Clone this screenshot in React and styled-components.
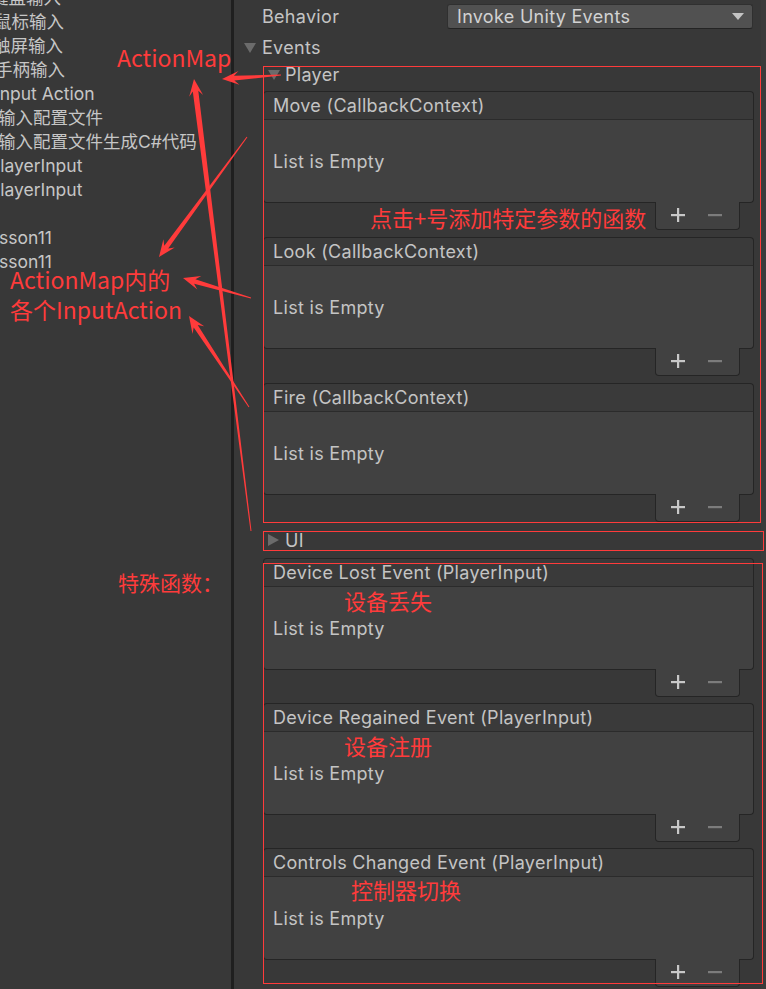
import React from 'react';
import styled, { createGlobalStyle } from 'styled-components';

const Global = createGlobalStyle`
  html, body { margin: 0; padding: 0; background: #383838; }
  body { width: 766px; height: 989px; overflow: hidden; }
`;

const UI_FONT = `Inter, "Noto Sans CJK SC", sans-serif`;
const NOTE_FONT = `"Noto Sans CJK SC", "Noto Sans", sans-serif`;
const RED = '#ff3b3b';

const Page = styled.div`
  position: relative;
  display: flex;
  width: 766px;
  height: 989px;
  overflow: hidden;
  background: #383838;
  font-family: ${UI_FONT};
  font-size: 18px;
  color: #c4c4c4;
`;

/* ---------- hierarchy (left) ---------- */
const Hierarchy = styled.div`
  flex: none;
  width: 231px;
  overflow: hidden;
  display: flex;
  flex-direction: column;
  margin-top: -14px;
  font-size: 17.5px;
`;

const TreeItem = styled.div`
  height: 24px;
  line-height: 24px;
  white-space: nowrap;
  margin-left: ${p => p.$shift}px;
  color: #c6c6c6;
`;

const Divider = styled.div`
  flex: none;
  width: 3px;
  background: #1f1f1f;
`;

/* ---------- inspector (right) ---------- */
const Inspector = styled.div`
  flex: 1;
  display: flex;
  flex-direction: column;
  min-width: 0;
  letter-spacing: 0.3px;
`;

const ScrollStrip = styled.div`
  flex: none;
  width: 5px;
  background: #3b3b3b;
`;

const PropertyRow = styled.div`
  display: flex;
  align-items: center;
  height: 33px;
  padding-left: 28px;
  padding-right: 8px;
`;

const Label = styled.div`
  width: 185px;
  flex: none;
`;

const Dropdown = styled.div`
  flex: 1;
  height: 25px;
  box-sizing: border-box;
  display: flex;
  align-items: center;
  justify-content: space-between;
  padding: 0 8px 0 9px;
  background: #515151;
  border: 1px solid #303030;
  border-bottom-color: #242424;
  border-radius: 3px;
  color: #d2d2d2;
`;

const Caret = styled.span`
  width: 0;
  height: 0;
  border-left: 6px solid transparent;
  border-right: 6px solid transparent;
  border-top: 7px solid #c4c4c4;
`;

const Foldout = styled.div`
  display: flex;
  align-items: center;
  height: ${p => p.$h}px;
  padding-left: ${p => p.$indent}px;
  gap: ${p => p.$gap}px;
  margin-top: ${p => p.$top || 0}px;
`;

const Arrow = styled.span`
  flex: none;
  width: 0;
  height: 0;
  ${p => p.$open
    ? `border-left: 6px solid transparent; border-right: 6px solid transparent; border-top: 10px solid #6b6b6b; margin-top: 1px;`
    : `border-top: 6px solid transparent; border-bottom: 6px solid transparent; border-left: 11px solid #6b6b6b;`}
`;

const Group = styled.div`
  display: flex;
  flex-direction: column;
  padding-left: 29px;
  padding-right: 7px;
`;

const CardList = styled.div`
  display: flex;
  flex-direction: column;
  gap: ${p => p.$gap}px;
  margin-top: ${p => p.$top || 0}px;
`;

const Card = styled.div`
  display: flex;
  flex-direction: column;
`;

const CardHeader = styled.div`
  height: 29px;
  box-sizing: border-box;
  display: flex;
  align-items: center;
  padding-left: 9px;
  background: #3a3a3a;
  border: 1px solid #252525;
  border-bottom-color: #2b2b2b;
  border-radius: 4px 4px 0 0;
  white-space: nowrap;
`;

const CardBody = styled.div`
  height: 83px;
  box-sizing: border-box;
  display: flex;
  align-items: center;
  padding-left: 9px;
  background: #414141;
  border: 1px solid #252525;
  border-top: none;
  border-radius: 0 0 4px 4px;
`;

const FooterRow = styled.div`
  height: 27px;
  display: flex;
  justify-content: flex-end;
  padding-right: 14px;
`;

const FooterTab = styled.div`
  width: 85px;
  box-sizing: border-box;
  margin-top: -1px;
  display: flex;
  align-items: center;
  padding-left: 3px;
  padding-bottom: 2px;
  background: #414141;
  border: 1px solid #252525;
  border-top: none;
  border-radius: 0 0 4px 4px;
`;

const IconButton = styled.div`
  width: 37px;
  height: 22px;
  display: flex;
  align-items: center;
  justify-content: center;
`;

const PlusIcon = () => (
  <svg width="14" height="14" viewBox="0 0 14 14">
    <rect x="6" y="0" width="2.2" height="14" fill="#c8c8c8" />
    <rect x="0" y="6" width="14" height="2.2" fill="#c8c8c8" />
  </svg>
);

const MinusIcon = () => (
  <svg width="14" height="14" viewBox="0 0 14 14">
    <rect x="0" y="6" width="14" height="2.2" fill="#7c7c7c" />
  </svg>
);

/* ---------- annotations ---------- */
const Overlay = styled.div`
  position: absolute;
  inset: 0;
  pointer-events: none;
`;

const Frame = styled.div`
  position: absolute;
  left: ${p => p.$x}px;
  top: ${p => p.$y}px;
  width: ${p => p.$w}px;
  height: ${p => p.$h}px;
  box-sizing: border-box;
  border: 1px solid ${RED};
`;

const Note = styled.div`
  position: absolute;
  left: ${p => p.$x}px;
  top: ${p => p.$y}px;
  font-family: ${NOTE_FONT};
  font-size: ${p => p.$size || 22}px;
  line-height: 30px;
  color: ${RED};
  white-space: nowrap;
`;

const ArrowLayer = styled.svg`
  position: absolute;
  left: 0;
  top: 0;
`;

function arrowPoints(tail, tip, head = 17, half = 7, neck = 2.4, tailW = 0.5) {
  const [x1, y1] = tail;
  const [x2, y2] = tip;
  const dx = x2 - x1, dy = y2 - y1;
  const len = Math.hypot(dx, dy);
  const ux = dx / len, uy = dy / len;
  const nx = -uy, ny = ux;
  const bx = x2 - ux * head, by = y2 - uy * head;
  const kx = x2 - ux * head * 0.72, ky = y2 - uy * head * 0.72;
  const pts = [
    [x1 + nx * tailW, y1 + ny * tailW],
    [kx + nx * neck, ky + ny * neck],
    [bx + nx * half, by + ny * half],
    [x2, y2],
    [bx - nx * half, by - ny * half],
    [kx - nx * neck, ky - ny * neck],
    [x1 - nx * tailW, y1 - ny * tailW],
  ];
  return pts.map(p => `${p[0].toFixed(1)},${p[1].toFixed(1)}`).join(' ');
}

const arrows = [
  { tail: [281, 75], tip: [222, 79] },
  { tail: [251, 531], tip: [194, 79], neck: 2.8 },
  { tail: [247, 137], tip: [159, 257] },
  { tail: [251, 298], tip: [183, 278] },
  { tail: [249, 407], tip: [189, 316] },
];

const tree = [
  { t: '键盘输入', s: -9 },
  { t: '鼠标输入', s: -6 },
  { t: '触屏输入', s: -7 },
  { t: '手柄输入', s: -5 },
  { t: 'Input Action', s: -5 },
  { t: '输入配置文件', s: -2 },
  { t: '输入配置文件生成C#代码', s: -2 },
  { t: 'PlayerInput', s: -11 },
  { t: 'PlayerInput', s: -11 },
  { t: '', s: 0 },
  { t: 'Lesson11', s: -21 },
  { t: 'Lesson11', s: -21 },
];

const EventCard = ({ title }) => (
  <Card>
    <CardHeader>{title}</CardHeader>
    <CardBody>List is Empty</CardBody>
    <FooterRow>
      <FooterTab>
        <IconButton><PlusIcon /></IconButton>
        <IconButton><MinusIcon /></IconButton>
      </FooterTab>
    </FooterRow>
  </Card>
);

export default function App() {
  return (
    <>
      <Global />
      <Page>
        <Hierarchy>
          {tree.map((it, i) => (
            <TreeItem key={i} $shift={it.s}>{it.t || '\u00a0'}</TreeItem>
          ))}
        </Hierarchy>
        <Divider />
        <Inspector>
          <PropertyRow>
            <Label>Behavior</Label>
            <Dropdown>
              <span>Invoke Unity Events</span>
              <Caret />
            </Dropdown>
          </PropertyRow>
          <Foldout $h={28} $indent={10} $gap={6}>
            <Arrow $open />
            <span>Events</span>
          </Foldout>
          <Group>
            <Foldout $h={26} $indent={5} $gap={5}>
              <Arrow $open />
              <span>Player</span>
            </Foldout>
            <CardList $gap={7} $top={4}>
              <EventCard title="Move (CallbackContext)" />
              <EventCard title="Look (CallbackContext)" />
              <EventCard title="Fire (CallbackContext)" />
            </CardList>
            <Foldout $h={24} $indent={5} $gap={6} $top={6}>
              <Arrow />
              <span>UI</span>
            </Foldout>
            <CardList $gap={6} $top={6}>
              <EventCard title="Device Lost Event (PlayerInput)" />
              <EventCard title="Device Regained Event (PlayerInput)" />
              <EventCard title="Controls Changed Event (PlayerInput)" />
            </CardList>
          </Group>
        </Inspector>
        <ScrollStrip />
        <Overlay>
          <Frame $x={263} $y={66} $w={498} $h={457} />
          <Frame $x={263} $y={531} $w={501} $h={20} />
          <Frame $x={263} $y={563} $w={500} $h={421} />
          <ArrowLayer width="766" height="989" viewBox="0 0 766 989">
            {arrows.map((a, i) => (
              <polygon key={i} points={arrowPoints(a.tail, a.tip, 17, 7, a.neck || 2.4)} fill={RED} />
            ))}
          </ArrowLayer>
          <Note $x={117} $y={42} $size={23}>ActionMap</Note>
          <Note $x={370} $y={202}>点击+号添加特定参数的函数</Note>
          <Note $x={10} $y={264} $size={23}>ActionMap内的</Note>
          <Note $x={10} $y={294} $size={23}>各个InputAction</Note>
          <Note $x={118} $y={567} $size={21}>特殊函数：</Note>
          <Note $x={344} $y={585}>设备丢失</Note>
          <Note $x={344} $y={730}>设备注册</Note>
          <Note $x={351} $y={874}>控制器切换</Note>
        </Overlay>
      </Page>
    </>
  );
}
